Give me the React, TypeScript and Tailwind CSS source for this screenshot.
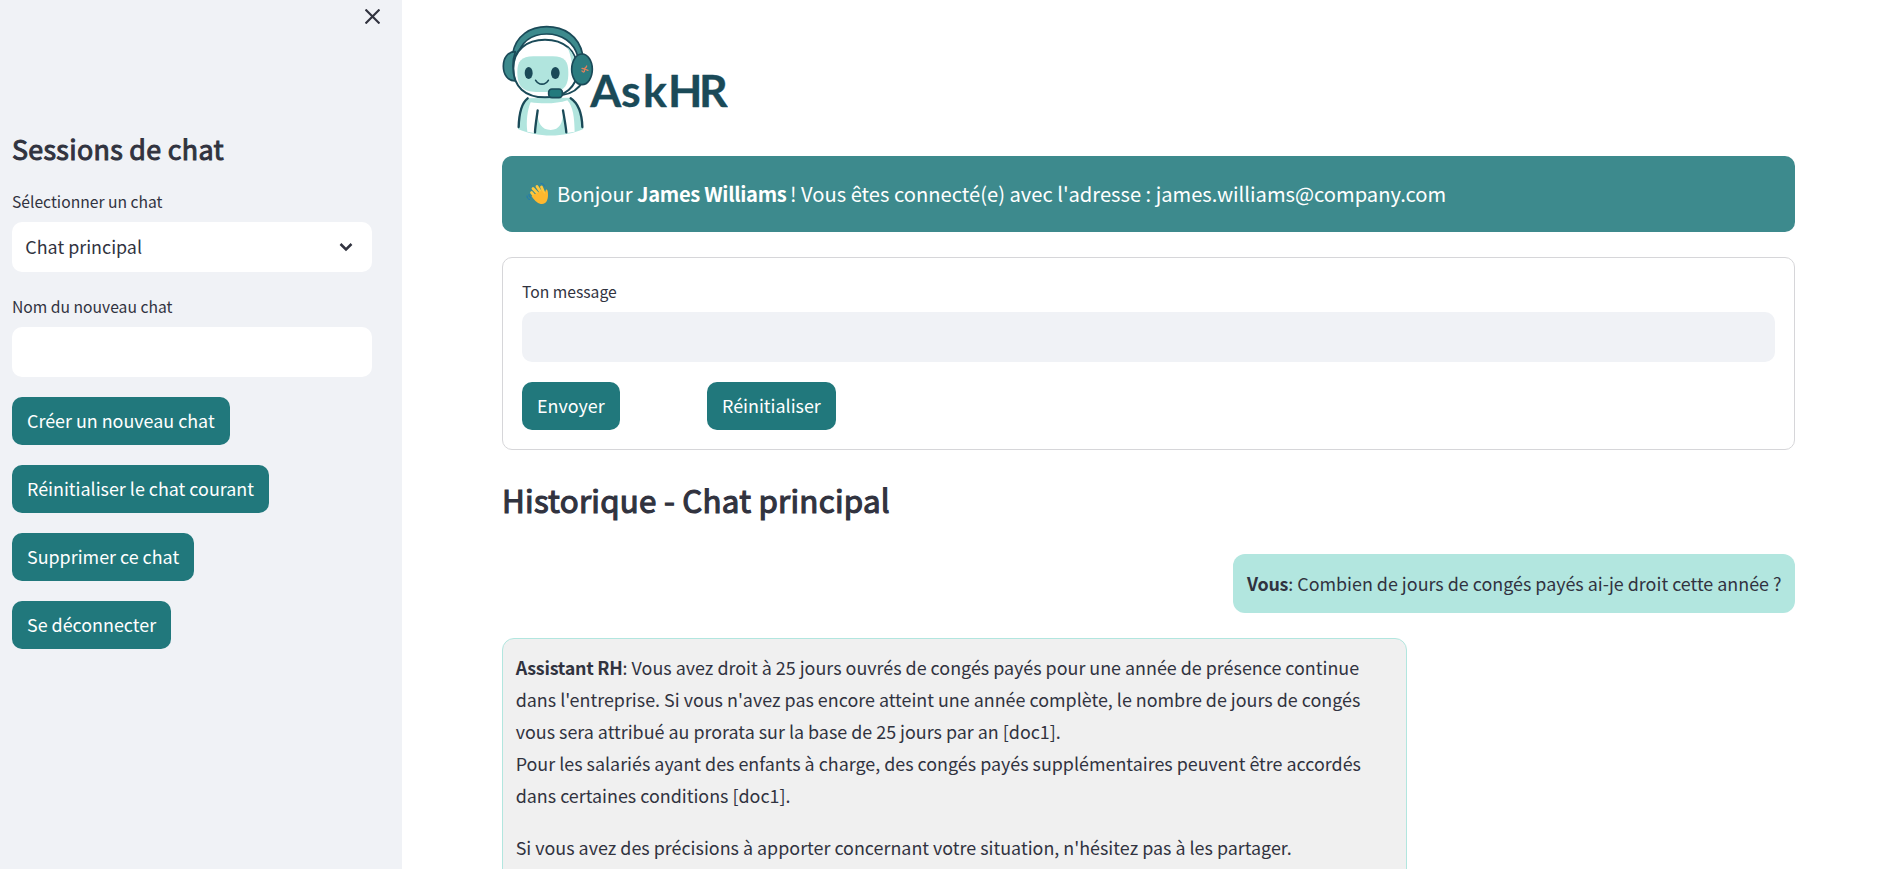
import React from "react";

function Logo() {
  return (
    <svg viewBox="36 30 678 333" className="block h-[111px] w-[226px] shrink-0" fill="none" strokeLinecap="round" strokeLinejoin="round">
      <path d="M112 250C92 262 86 300 84 342C140 368 225 368 280 342C278 300 268 262 240 248Z" fill="#b1e5de" />
      <path d="M122 262C112 285 108 320 112 350L132 354L142 286C142 325 155 345 182 345C208 345 220 325 219 286L231 354L254 350C253 310 250 275 232 256C200 268 150 266 122 262Z" fill="#fff" />
      <path d="M113 250C92 266 87 300 86 336M242 250C266 266 276 300 277 336M143 286C140 310 136 330 135 352M219 286C223 310 227 330 229 352" stroke="#1a4a58" strokeWidth="7" />
      <path d="M68 115C78 62 120 35 170 35C222 35 266 62 278 118L264 126C252 80 214 57 170 57C130 57 94 76 80 128Z" fill="#3d8a8d" stroke="#1a4a58" strokeWidth="5" />
      <path d="M70 160C70 105 110 74 165 74C220 74 262 105 262 165C262 215 225 247 165 247C105 247 70 215 70 160Z" fill="#fff" stroke="#1a4a58" strokeWidth="6" />
      <path d="M232 96C252 116 262 140 258 180C246 160 244 120 232 96Z" fill="#b1e5de" />
      <path d="M82 172C82 138 94 125 130 124H188C224 125 235 138 235 174C235 216 220 230 180 231H138C98 230 82 214 82 172Z" fill="#b1e5de" />
      <ellipse cx="116" cy="174" rx="12" ry="18" fill="#1a4a58" />
      <ellipse cx="196" cy="174" rx="13" ry="18" fill="#1a4a58" />
      <path d="M137 196C146 211 166 211 175 196" stroke="#1a4a58" strokeWidth="5" />
      <path d="M76 110C54 110 40 128 40 154C40 180 54 197 75 198C67 168 66 138 76 110Z" fill="#3d8a8d" stroke="#1a4a58" strokeWidth="5" />
      <path d="M280 196C268 220 246 236 216 240" stroke="#1a4a58" strokeWidth="6" />
      <ellipse cx="276" cy="163" rx="31" ry="46" fill="#2c7c80" stroke="#1a4a58" strokeWidth="5" />
      <path d="M276 160L284 162L283 170M286 158L284 162L294 166M280 171L276 168M290 153L288 157" stroke="#e0805c" strokeWidth="4" />
      <rect x="176" y="222" width="41" height="26" rx="10" fill="#237a7d" stroke="#1a4a58" strokeWidth="5" />
      <text x="301 393 459 534 627" y="275" fill="#1a4a58" stroke="#1a4a58" strokeWidth="1" className="font-['Lato'] text-[134px] font-bold">AskHR</text>
    </svg>
  );
}

function Wave() {
  return (
    <svg viewBox="0 0 24 24" className="h-6 w-6 shrink-0" fill="none" strokeLinecap="round" strokeLinejoin="round">
      <path d="M5.500 10.500L11 17M7 6.500L13 13M11 4.500L16 12M15.500 5L18 11" stroke="#ffc83d" strokeWidth="2.800" />
      <path d="M5.500 14L16 8.500L18.500 12L20 7.500C21.500 7.500 22 9 22 13C22 18 20 22 16 22C12.500 22 9 19.500 5.500 14Z" fill="#ffb82e" />
      <path d="M15 1.500C17 1.500 18 2.500 18.500 4M1 14C1 16 2 17 3.500 17.500M3 12.500C3 14 3.500 15 4.500 15.500" stroke="#1f78b4" strokeWidth="1" />
    </svg>
  );
}

function Button({ children }: { children: React.ReactNode }) {
  return (
    <button className="flex h-12 items-center rounded-[10px] bg-[#21787c] px-[15px] text-[17.900px] font-normal whitespace-nowrap text-white">
      <span className="-mt-px">{children}</span>
    </button>
  );
}

export default function App() {
  return (
    <div className="flex h-[869px] w-full overflow-hidden bg-white font-['Noto_Sans_CJK_SC',sans-serif] text-[17.900px] text-[#31333f]">
      <aside className="w-[402px] shrink-0 bg-[#f0f2f6] pr-[30px] pl-3">
        <div className="flex h-[131px] justify-end pt-[9px]">
          <svg viewBox="0 0 14 14" className="mr-[-8px] h-[15px] w-[15px]" stroke="#31333f" strokeWidth="2">
            <path d="M.5 .5L13.500 13.500M13.500 .5L.5 13.500" />
          </svg>
        </div>
        <h2 className="h-[61px] text-[26.800px] leading-[36px] tracking-[0.330px] [-webkit-text-stroke:1px]">Sessions de chat</h2>
        <label className="block h-[30px] text-[15.670px] leading-5">Sélectionner un chat</label>
        <div className="flex h-[50px] items-center justify-between rounded-[10px] bg-white px-[14px]">
          <span className="-mt-px -ml-[0.700px]">Chat principal</span>
          <svg viewBox="0 0 14 10" className="mr-[5px] h-[10px] w-[14px]" fill="none" stroke="#31333f" strokeWidth="2.500">
            <path d="M1.500 2L7 7.500L12.500 2" />
          </svg>
        </div>
        <label className="mt-[25px] block h-[30px] text-[15.670px] leading-5">Nom du nouveau chat</label>
        <div className="h-[50px] rounded-[10px] bg-white" />
        <div className="mt-5 flex flex-col items-start gap-5">
          <Button>Créer un nouveau chat</Button>
          <Button>Réinitialiser le chat courant</Button>
          <Button>Supprimer ce chat</Button>
          <Button>Se déconnecter</Button>
        </div>
      </aside>
      <main className="flex min-w-0 flex-1 flex-col pt-[25px] pr-[84px] pl-[100px]">
        <Logo />
        <div className="mt-5 flex h-[76px] shrink-0 items-center rounded-[10px] bg-[#3d8a8d] pl-6 text-[20.150px] text-white">
          <Wave />
          <p className="mt-px ml-[7px] whitespace-pre">Bonjour <b className="tracking-[-0.300px]">James Williams</b><span className="-ml-px"> </span>! Vous êtes connecté(e) avec l'adresse : james.williams@company.com</p>
        </div>
        <section className="mt-[25px] h-[193px] shrink-0 rounded-[10px] border border-[#d6d6d9] px-[19px] pt-[24px]">
          <label className="block h-[30px] text-[15.670px] leading-5">Ton message</label>
          <div className="h-[50px] rounded-[10px] bg-[#f0f2f6]" />
          <div className="mt-5 grid grid-cols-[185px_auto] justify-start">
            <div className="flex"><Button>Envoyer</Button></div>
            <Button>Réinitialiser</Button>
          </div>
        </section>
        <h1 className="mt-[29px] h-[75px] shrink-0 text-[31.300px] leading-[42px] tracking-[0.250px] [-webkit-text-stroke:1.200px]">Historique - Chat principal</h1>
        <div className="flex h-[59px] shrink-0 items-center self-end rounded-xl bg-[#b2e6df] px-[13.500px]">
          <p className="-mt-px whitespace-nowrap"><b className="tracking-[-0.200px]">Vous</b>: Combien de jours de congés payés ai-je droit cette année ?</p>
        </div>
        <div className="mt-[25px] h-[280px] w-[905px] shrink-0 rounded-xl border border-[#b2e6df] bg-[#f0f0f0] px-[12.700px] pt-3 leading-8 whitespace-nowrap">
          <p><b className="tracking-[-0.250px]">Assistant RH</b>: Vous avez droit à 25 jours ouvrés de congés payés pour une année de présence continue<br />dans l'entreprise. Si vous n'avez pas encore atteint une année complète, le nombre de jours de congés<br />vous sera attribué au prorata sur la base de 25 jours par an [doc1].<br />Pour les salariés ayant des enfants à charge, des congés payés supplémentaires peuvent être accordés<br />dans certaines conditions [doc1].</p>
          <p className="mt-5">Si vous avez des précisions à apporter concernant votre situation, n'hésitez pas à les partager.</p>
        </div>
      </main>
    </div>
  );
}
